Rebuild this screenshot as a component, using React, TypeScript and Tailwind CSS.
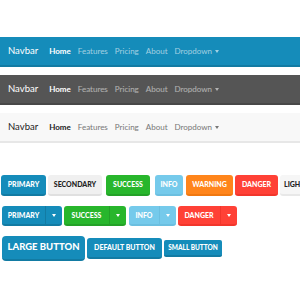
import { ReactNode } from 'react';

type NavTheme = {
  bar: string;
  brand: string;
  active: string;
  link: string;
};

const navThemes: NavTheme[] = [
  { bar: 'bg-[#158cba] border-b-2 border-[#127ba3]', brand: 'text-white', active: 'text-white', link: 'text-white/60' },
  { bar: 'bg-[#555555] border-b-2 border-[#484848]', brand: 'text-white', active: 'text-white', link: 'text-white/55' },
  { bar: 'bg-[#f8f8f8] border-b-2 border-[#e7e7e7]', brand: 'text-[#222]', active: 'text-[#222]', link: 'text-[#777]' },
];

function Caret() {
  return <span className="inline-block ml-[3px] align-middle border-x-[2.5px] border-t-[3px] border-x-transparent border-t-current" />;
}

function Navbar({ t }: { t: NavTheme }) {
  return (
    <nav className={`h-[30px] flex items-center px-[8px] ${t.bar}`}>
      <span className={`text-[9.5px] mr-[11px] ${t.brand}`}>Navbar</span>
      <div className="flex items-center gap-[7px] text-[8px]">
        <span className={`font-bold ${t.active}`}>Home</span>
        <span className={t.link}>Features</span>
        <span className={t.link}>Pricing</span>
        <span className={t.link}>About</span>
        <span className={t.link}>
          Dropdown
          <Caret />
        </span>
      </div>
    </nav>
  );
}

function Btn({ cls, w, children }: { cls: string; w: string; children: ReactNode }) {
  return (
    <div className={`h-[21px] ${w} shrink-0 rounded-[3px] border-b-2 flex items-center justify-center text-[7px] font-black ${cls}`}>
      {children}
    </div>
  );
}

function Split({ cls, div, main, w }: { cls: string; div: string; main: string; w: string }) {
  return (
    <div className={`h-[20px] ${w} shrink-0 rounded-[3px] border-b-2 flex text-[7px] font-black text-white ${cls}`}>
      <div className="flex-1 flex items-center justify-center">{main}</div>
      <div className={`w-[17px] border-l flex items-center justify-center ${div}`}>
        <span className="inline-block border-x-[2.5px] border-t-[3px] border-x-transparent border-t-white" />
      </div>
    </div>
  );
}

export default function App() {
  return (
    <div className="w-[300px] h-[300px] overflow-hidden bg-white pt-[37px]" style={{ fontFamily: 'Lato, "Open Sans", sans-serif' }}>
      <div className="flex flex-col gap-[8px]">
        {navThemes.map((t, i) => (
          <Navbar key={i} t={t} />
        ))}
      </div>

      <div className="mt-[32px] pl-[1px] flex gap-[2px] whitespace-nowrap">
        <Btn cls="bg-[#158cba] border-[#127ba3] text-white" w="w-[45px]">PRIMARY</Btn>
        <Btn cls="bg-[#f0f0f0] border-[#e0e0e0] text-[#222]" w="w-[54px]">SECONDARY</Btn>
        <Btn cls="bg-[#28b62c] border-[#23a127] text-white ml-[2px]" w="w-[44px]">SUCCESS</Btn>
        <Btn cls="bg-[#75caeb] border-[#6bbfe0] text-white ml-[3px]" w="w-[28px]">INFO</Btn>
        <Btn cls="bg-[#ff851b] border-[#f07810] text-white ml-[1px]" w="w-[47px]">WARNING</Btn>
        <Btn cls="bg-[#ff4136] border-[#f2362b] text-white" w="w-[43px]">DANGER</Btn>
        <Btn cls="bg-[#f6f6f6] border-[#e8e8e8] text-[#222] justify-start pl-[4px]" w="w-[36px]">LIGHT</Btn>
      </div>

      <div className="mt-[10px] pl-[2px] flex gap-[2px] whitespace-nowrap">
        <Split cls="bg-[#158cba] border-[#127ba3]" div="border-[#127ba3]" main="PRIMARY" w="w-[60px]" />
        <Split cls="bg-[#28b62c] border-[#23a127]" div="border-[#23a127]" main="SUCCESS" w="w-[62px]" />
        <Split cls="bg-[#75caeb] border-[#6bbfe0] ml-[1px]" div="border-[#6bbfe0]" main="INFO" w="w-[47px]" />
        <Split cls="bg-[#ff4136] border-[#f2362b]" div="border-[#f2362b]" main="DANGER" w="w-[59px]" />
      </div>

      <div className="mt-[10px] pl-[2px] flex items-center gap-[2px] whitespace-nowrap text-white">
        <div className="h-[25px] w-[83px] rounded-[4px] bg-[#158cba] border-b-2 border-[#127ba3] flex items-center justify-center text-[9.5px] font-black">
          LARGE BUTTON
        </div>
        <div className="h-[21px] w-[75px] rounded-[3px] bg-[#158cba] border-b-2 border-[#127ba3] flex items-center justify-center text-[7px] font-black">
          DEFAULT BUTTON
        </div>
        <div className="h-[17px] w-[58px] rounded-[2px] bg-[#158cba] border-b-2 border-[#127ba3] flex items-center justify-center text-[6.5px] font-black">
          SMALL BUTTON
        </div>
      </div>
    </div>
  );
}
